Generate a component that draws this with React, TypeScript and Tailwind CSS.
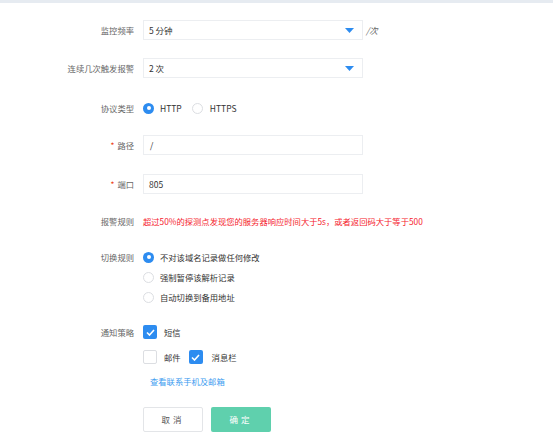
import React from "react";

const font = { fontFamily: '"Noto Sans CJK SC", "Noto Sans", sans-serif' };

function Label({ children, req }: { children: React.ReactNode; req?: boolean }) {
  return (
    <div className="w-[134px] shrink-0 text-right text-[8.3px] text-[#666]">
      {req && <span className="mr-[3px] text-[#ed3f14]">*</span>}
      {children}
    </div>
  );
}

function Caret() {
  return (
    <svg width="9" height="5" viewBox="0 0 9 5" className="absolute right-[8px] top-[7px]">
      <path d="M0 0 L9 0 L4.5 5 Z" fill="#2d8cf0" />
    </svg>
  );
}

function Radio({ checked }: { checked?: boolean }) {
  return checked ? (
    <span className="flex h-[11px] w-[11px] shrink-0 items-center justify-center rounded-full bg-[#2d8cf0]">
      <span className="h-[4px] w-[4px] rounded-full bg-white" />
    </span>
  ) : (
    <span className="block h-[11px] w-[11px] shrink-0 rounded-full border border-[#dcdee2] bg-white" />
  );
}

function Check({ checked }: { checked?: boolean }) {
  return checked ? (
    <span className="flex h-[14px] w-[14px] shrink-0 items-center justify-center rounded-[2px] bg-[#2d8cf0]">
      <svg width="9" height="7" viewBox="0 0 9 7">
        <path d="M1 3.5 L3.5 6 L8 1" fill="none" stroke="white" strokeWidth="1.6" />
      </svg>
    </span>
  ) : (
    <span className="block h-[14px] w-[14px] shrink-0 rounded-[2px] border border-[#dcdee2] bg-white" />
  );
}

export default function App() {
  return (
    <div className="h-[447px] w-[553px] bg-white" style={font}>
      <div className="h-[3px] bg-[#e6ebf1]" />
      <div className="flex flex-col pt-[17px]">
        <div className="flex h-[20px] items-center gap-[9px]">
          <Label>监控频率</Label>
          <div className="relative flex h-[20px] w-[220px] items-center border border-[#eceef1] pl-[5px] text-[8.5px] text-[#333]">
            5 分钟
            <Caret />
          </div>
          <span className="-ml-[6px] text-[8.5px] italic text-[#666]">/次</span>
        </div>
        <div className="mt-[18px] flex h-[20px] items-center gap-[9px]">
          <Label>连续几次触发报警</Label>
          <div className="relative flex h-[20px] w-[220px] items-center border border-[#eceef1] pl-[5px] text-[8.5px] text-[#333]">
            2 次
            <Caret />
          </div>
        </div>
        <div className="mt-[20px] flex h-[20px] items-center gap-[9px]">
          <Label>协议类型</Label>
          <div className="flex items-center text-[8.5px] text-[#333]">
            <Radio checked />
            <span className="ml-[6px]">HTTP</span>
            <span className="ml-[10px] flex"><Radio /></span>
            <span className="ml-[7px]">HTTPS</span>
          </div>
        </div>
        <div className="mt-[17px] flex h-[20px] items-center gap-[9px]">
          <Label req>路径</Label>
          <div className="flex h-[20px] w-[220px] items-center border border-[#eceef1] pl-[6px] text-[8.5px] text-[#333]">
            /
          </div>
        </div>
        <div className="mt-[19px] flex h-[20px] items-center gap-[9px]">
          <Label req>端口</Label>
          <div className="flex h-[20px] w-[220px] items-center border border-[#eceef1] pl-[5px] text-[8.5px] text-[#333]">
            805
          </div>
        </div>
        <div className="mt-[17px] flex h-[20px] items-center gap-[9px]">
          <Label>报警规则</Label>
          <div className="whitespace-nowrap text-[8.3px] text-[#f5222d]">
            超过50%的探测点发现您的服务器响应时间大于5s，或者返回码大于等于500
          </div>
        </div>
        <div className="mt-[16px] flex items-start gap-[9px]">
          <div className="flex h-[20px] items-center">
            <Label>切换规则</Label>
          </div>
          <div className="flex flex-col text-[8.3px] text-[#333]">
            <div className="flex h-[20px] items-center">
              <Radio checked />
              <span className="ml-[6px]">不对该域名记录做任何修改</span>
            </div>
            <div className="flex h-[20px] items-center">
              <Radio />
              <span className="ml-[6px]">强制暂停该解析记录</span>
            </div>
            <div className="flex h-[20px] items-center">
              <Radio />
              <span className="ml-[6px]">自动切换到备用地址</span>
            </div>
          </div>
        </div>
        <div className="mt-[15px] flex h-[20px] items-center gap-[9px]">
          <Label>通知策略</Label>
          <div className="flex items-center text-[8.3px] text-[#333]">
            <Check checked />
            <span className="ml-[7px]">短信</span>
          </div>
        </div>
        <div className="mt-[5px] flex h-[20px] items-center gap-[9px]">
          <div className="w-[134px] shrink-0" />
          <div className="flex items-center text-[8.3px] text-[#333]">
            <Check />
            <span className="ml-[7px]">邮件</span>
            <span className="ml-[8px] flex"><Check checked /></span>
            <span className="ml-[9px]">消息栏</span>
          </div>
        </div>
        <div className="mt-[4px] flex h-[20px] items-center gap-[9px]">
          <div className="w-[134px] shrink-0" />
          <span className="ml-[7px] text-[8.3px] text-[#3d9cf0]">查看联系手机及邮箱</span>
        </div>
        <div className="mt-[16px] flex items-center gap-[9px]">
          <div className="w-[134px] shrink-0" />
          <div className="flex gap-[8px]">
            <button className="flex h-[25px] w-[60px] items-center justify-center rounded-[2px] border border-[#e3e5e8] bg-white text-[8.5px] tracking-[3px] text-[#555]">
              取消
            </button>
            <button className="flex h-[25px] w-[60px] items-center justify-center rounded-[2px] bg-[#5fd0ad] text-[8.5px] tracking-[3px] text-white">
              确定
            </button>
          </div>
        </div>
      </div>
    </div>
  );
}
